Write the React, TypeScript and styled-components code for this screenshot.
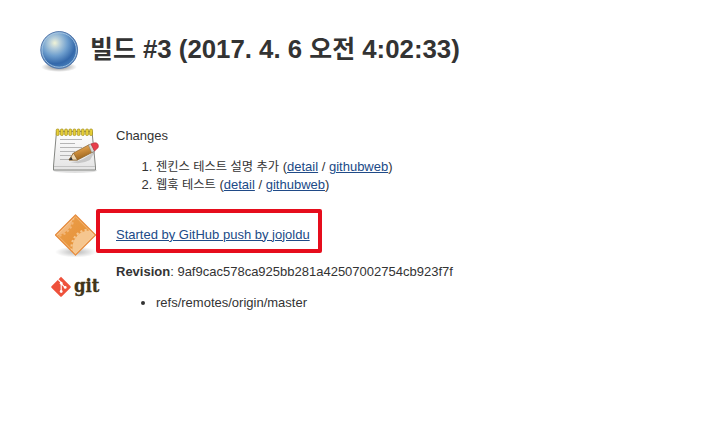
import React from "react";
import styled, { createGlobalStyle } from "styled-components";

const GlobalStyle = createGlobalStyle`
  * { box-sizing: border-box; }
  body {
    margin: 0;
    background: #fff;
    color: #333;
    font-family: "Liberation Sans", "Noto Sans CJK KR", sans-serif;
    font-size: 13px;
    line-height: 18px;
  }
`;

const Page = styled.main`
  width: 725px;
  height: 425px;
  overflow: hidden;
  padding: 27px 0 0 35px;
`;

const Header = styled.header`
  display: flex;
  height: 48px;
`;

const Title = styled.h1`
  margin: 0 0 0 7px;
  font-size: 25.8px;
  line-height: 44px;
  font-weight: 700;
  white-space: nowrap;
`;

const Korean = styled.span<{ $scale: number }>`
  font-size: ${(p) => p.$scale}em;
  line-height: 1;
`;

const Summary = styled.section`
  margin: 52px 0 0 16px;
`;

const Row = styled.div<{ $height: number }>`
  display: grid;
  grid-template-columns: 48px 1fr;
  column-gap: 17px;
  height: ${(p) => p.$height}px;
`;

const Content = styled.div`
  white-space: nowrap;
`;

const Changes = styled.ol`
  margin: 13px 0 0;
  padding-left: 40px;
`;

const Refs = styled.ul`
  margin: 13px 0 0;
  padding-left: 40px;
`;

const Item = styled.li`
  height: 18px;
`;

const Link = styled.a`
  color: #204a87;
  text-decoration: underline;
`;

const CauseFrame = styled.div`
  display: flex;
  align-items: center;
  width: 226px;
  height: 44px;
  margin: -2px 0 0 -20px;
  padding: 7px 0 0 16px;
  border: 4px solid #e60d1c;
  border-radius: 2px;
  position: relative;
  white-space: nowrap;
`;

const Icon = styled.svg`
  display: block;
  width: 48px;
  height: 48px;
  overflow: visible;
`;

function BlueBall() {
  return (
    <Icon viewBox="0 0 48 48">
      <defs>
        <radialGradient id="ball" cx="0.38" cy="0.31" r="0.72">
          <stop offset="0" stopColor="#f0f3d7" />
          <stop offset="0.2" stopColor="#b6cedb" />
          <stop offset="0.48" stopColor="#6f9fce" />
          <stop offset="0.78" stopColor="#3468aa" />
          <stop offset="1" stopColor="#477fbb" />
        </radialGradient>
        <radialGradient id="ballShadow">
          <stop offset="0.4" stopColor="#000" stopOpacity="0.3" />
          <stop offset="1" stopColor="#000" stopOpacity="0" />
        </radialGradient>
      </defs>
      <ellipse cx="24" cy="40" rx="18" ry="5" fill="url(#ballShadow)" />
      <circle cx="24.2" cy="23" r="18.4" fill="url(#ball)" stroke="#5578ab" strokeWidth="1" />
      <circle cx="24.2" cy="23" r="17.2" fill="none" stroke="#a8c7e2" strokeWidth="0.9" />
    </Icon>
  );
}

const ringXs = [6, 10.2, 14.4, 18.6, 22.8, 27, 31.2, 35.4, 39.4];

function Notepad() {
  return (
    <Icon viewBox="0 0 48 48">
      <defs>
        <linearGradient id="paper" x1="0" y1="0" x2="0" y2="1">
          <stop offset="0" stopColor="#fff" />
          <stop offset="1" stopColor="#e4e4e4" />
        </linearGradient>
        <linearGradient id="pencil" x1="0" y1="0" x2="0.4" y2="1">
          <stop offset="0" stopColor="#f0c583" />
          <stop offset="0.5" stopColor="#d1913e" />
          <stop offset="1" stopColor="#9b641d" />
        </linearGradient>
      </defs>
      <ellipse cx="24" cy="43.5" rx="22" ry="2.5" fill="#000" opacity="0.12" />
      <path d="M5.5 4.5H41L44.5 40V43H2.5V39Z" fill="url(#paper)" stroke="#858783" strokeLinejoin="round" />
      <path d="M3 39.5H44" stroke="#c4c4c4" />
      <path d="M9 12.5H31M9 16.5H24M9 20.5H31M9 24.5H24M9 28.5H20M9 32.5H18" stroke="#b5b5b5" />
      {ringXs.map((x) => (
        <rect key={x} x={x - 0.8} y="2" width="2.9" height="6.5" rx="1.2" fill="#e7cf37" stroke="#a18c1a" strokeWidth="0.7" />
      ))}
      <path d="M19 35Q30 36 45 23L39 33Q30 38 19 35Z" fill="#000" opacity="0.15" />
      <path d="M18 33L22.5 26L38.3 17.6L42 25L26.5 33Z" fill="url(#pencil)" stroke="#8c6127" strokeWidth="0.7" />
      <path d="M18 33L22.5 26L26.5 33Z" fill="#ecd6b1" stroke="#7b501a" strokeWidth="0.6" />
      <path d="M18 33L20.3 29.8L21.7 33Z" fill="#333" />
      <path d="M37.5 18.2L40.2 16.8L43.6 24L40.7 25.6Z" fill="#d7d7d3" stroke="#777" strokeWidth="0.5" />
      <path d="M40 16.9L43.8 15.8Q48 15.8 47.2 20.5L43.5 24Z" fill="#e83e4b" stroke="#b92f39" strokeWidth="0.7" />
    </Icon>
  );
}

function GearDiamond() {
  return (
    <Icon viewBox="0 0 48 48">
      <defs>
        <clipPath id="diamondClip"><path d="M24.5 3.5L45 24L24.5 44.5L4 24Z" /></clipPath>
        <linearGradient id="orange" x1="0" y1="0" x2="1" y2="1">
          <stop offset="0" stopColor="#eca14d" />
          <stop offset="1" stopColor="#e48b30" />
        </linearGradient>
        <radialGradient id="gearShadow">
          <stop offset="0.2" stopColor="#000" stopOpacity="0.22" />
          <stop offset="1" stopColor="#000" stopOpacity="0" />
        </radialGradient>
      </defs>
      <ellipse cx="25" cy="41" rx="21" ry="5.5" fill="url(#gearShadow)" />
      <path d="M24.5 3.5L45 24L24.5 44.5L4 24Z" fill="url(#orange)" />
      <g clipPath="url(#diamondClip)">
        <circle cx="4" cy="7" r="17.5" fill="#f2b678" />
        <circle cx="4" cy="7" r="18.3" fill="none" stroke="#f2b678" strokeWidth="2" strokeDasharray="2.2 2.2" />
        <circle cx="38.5" cy="36.5" r="17" fill="#f5c68f" />
        <circle cx="38.5" cy="36.5" r="18" fill="none" stroke="#f5c68f" strokeWidth="2.2" strokeDasharray="2.2 2.2" />
      </g>
      <path d="M24.5 4L44.5 24L24.5 44L4.5 24Z" fill="none" stroke="#e79147" strokeWidth="1.2" strokeLinejoin="round" />
      <path d="M24.5 5.7L42.8 24L24.5 42.3L6.2 24Z" fill="none" stroke="#ffd7a4" strokeWidth="0.7" opacity="0.7" />
    </Icon>
  );
}

const GitWord = styled.text`
  font-family: "DejaVu Serif", serif;
  font-size: 19px;
  font-weight: 700;
  fill: #413619;
  stroke: #413619;
  stroke-width: 0.3px;
`;

function GitLogo() {
  return (
    <Icon viewBox="0 0 48 48">
      <path d="M10 13.8L19.5 23.3Q20.2 24 19.5 24.7L10.7 33.5Q10 34.2 9.3 33.5L.5 24.7Q-.2 24 .5 23.3L9.3 14.5Z" fill="#ee513b" />
      <path d="M7.2 16.5L10.2 19.6V29M10.2 20.5L14 24.3" fill="none" stroke="#fff" strokeWidth="1.1" />
      <circle cx="10.2" cy="20.2" r="1.4" fill="#fff" />
      <circle cx="10.2" cy="28.5" r="1.4" fill="#fff" />
      <circle cx="14.2" cy="24.4" r="1.4" fill="#fff" />
      <GitWord x="23" y="29" textLength="25.5" lengthAdjust="spacingAndGlyphs">git</GitWord>
    </Icon>
  );
}

function ChangeItem({ children }: { children: string }) {
  return (
    <Item>
      <Korean $scale={0.945}>{children}</Korean> (<Link>detail</Link> / <Link>githubweb</Link>)
    </Item>
  );
}

export default function App() {
  return (
    <>
      <GlobalStyle />
      <Page>
        <Header>
          <BlueBall />
          <Title>
            <Korean $scale={0.965}>빌드</Korean> #3 (2017. 4. 6 <Korean $scale={0.965}>오전</Korean> 4:02:33)
          </Title>
        </Header>
        <Summary>
          <Row $height={84}>
            <Notepad />
            <Content>
              Changes
              <Changes>
                <ChangeItem>젠킨스 테스트 설명 추가</ChangeItem>
                <ChangeItem>웹훅 테스트</ChangeItem>
              </Changes>
            </Content>
          </Row>
          <Row $height={52}>
            <GearDiamond />
            <CauseFrame>
              <Link>Started by GitHub push by jojoldu</Link>
            </CauseFrame>
          </Row>
          <Row $height={48}>
            <GitLogo />
            <Content>
              <b>Revision</b>: 9af9cac578ca925bb281a42507002754cb923f7f
              <Refs>
                <Item>refs/remotes/origin/master</Item>
              </Refs>
            </Content>
          </Row>
        </Summary>
      </Page>
    </>
  );
}
